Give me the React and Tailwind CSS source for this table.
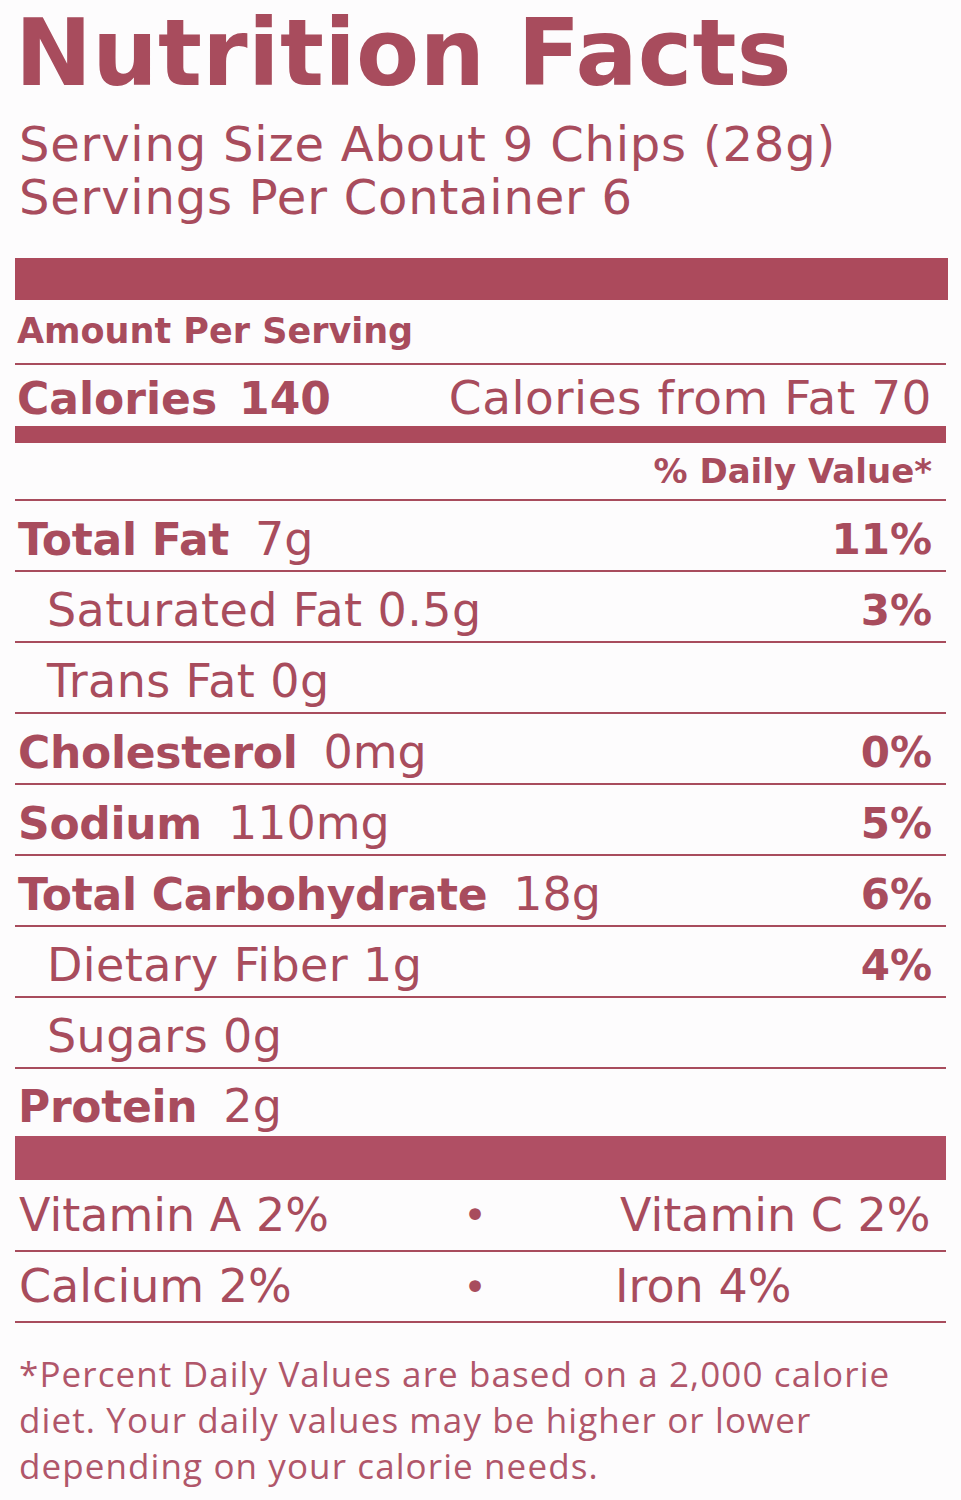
import React from 'react'

const rows = [
  { name: 'Total Fat', amount: '7g', dv: '11%', bold: true },
  { name: 'Saturated Fat 0.5g', dv: '3%' },
  { name: 'Trans Fat 0g' },
  { name: 'Cholesterol', amount: '0mg', dv: '0%', bold: true },
  { name: 'Sodium', amount: '110mg', dv: '5%', bold: true },
  { name: 'Total Carbohydrate', amount: '18g', dv: '6%', bold: true },
  { name: 'Dietary Fiber 1g', dv: '4%' },
  { name: 'Sugars 0g' },
  { name: 'Protein', amount: '2g', bold: true, last: true },
]

function NutrientRow({ name, amount, dv, bold, last }) {
  return (
    <div
      className={
        'flex items-center justify-between pt-[8px] pr-[14px] ' +
        (last ? 'h-[67px]' : 'h-[71px] border-b-2 border-[#a84c5d]')
      }
    >
      {bold ? (
        <div className="pl-[3px] flex items-baseline">
          <span className="font-bold text-[44px] tracking-[-0.3px]">{name}</span>
          <span className="ml-[26px] text-[46px]">{amount}</span>
        </div>
      ) : (
        <div className="pl-[32px] text-[46px] tracking-[0.4px]">{name}</div>
      )}
      {dv && <span className="font-bold text-[42px]">{dv}</span>}
    </div>
  )
}

export default function App() {
  return (
    <div
      className="min-h-screen w-[961px] bg-[#fdfcfd] text-[#a84c5d] px-[15px]"
      style={{ fontFamily: '"DejaVu Sans", "Open Sans", sans-serif' }}
    >
      <h1 className="h-[108px] text-[92px] font-bold leading-[108px] tracking-[0.3px]">Nutrition Facts</h1>
      <div className="mt-[10px] pl-[4px] text-[48px] leading-[53px] tracking-[0.8px]">
        <div>Serving Size About 9 Chips (28g)</div>
        <div>Servings Per Container 6</div>
      </div>
      <div className="mt-[34px] h-[42px] bg-[#ac4a5c] mr-[-2px]" />
      <div className="flex items-center h-[65px] border-b-2 border-[#a84c5d] pl-[2px]">
        <span className="font-bold text-[35px]">Amount Per Serving</span>
      </div>
      <div className="flex items-center justify-between h-[61px] pt-[6px] pr-[14px] pl-[2px]">
        <span className="font-bold text-[44px]">
          Calories<span className="ml-[22px]">140</span>
        </span>
        <span className="text-[47px] tracking-[0.5px]">Calories from Fat 70</span>
      </div>
      <div className="h-[17px] bg-[#ac4a5c]" />
      <div className="flex items-center justify-end h-[58px] border-b-2 border-[#a84c5d] pr-[14px]">
        <span className="font-bold text-[34px]">% Daily Value*</span>
      </div>
      {rows.map((r) => (
        <NutrientRow key={r.name} {...r} />
      ))}
      <div className="h-[44px] bg-[#b04f64]" />
      <div className="flex items-center h-[72px] border-b-2 border-[#a84c5d] text-[46px]">
        <span className="w-[445px] pl-[4px]">Vitamin A 2%</span>
        <span className="w-[30px] text-center text-[40px]">•</span>
        <span className="pl-[130px]">Vitamin C 2%</span>
      </div>
      <div className="flex items-center h-[71px] border-b-2 border-[#a84c5d] text-[46px]">
        <span className="w-[445px] pl-[4px]">Calcium 2%</span>
        <span className="w-[30px] text-center text-[40px]">•</span>
        <span className="pl-[125px]">Iron 4%</span>
      </div>
      <p
        className="pt-[28px] pl-[4px] text-[35px] leading-[46px] tracking-[1.1px] text-[#b0566a]"
        style={{ fontFamily: '"Open Sans", sans-serif' }}
      >
        *Percent Daily Values are based on a 2,000 calorie
        <br />
        diet. Your daily values may be higher or lower
        <br />
        depending on your calorie needs.
      </p>
    </div>
  )
}
